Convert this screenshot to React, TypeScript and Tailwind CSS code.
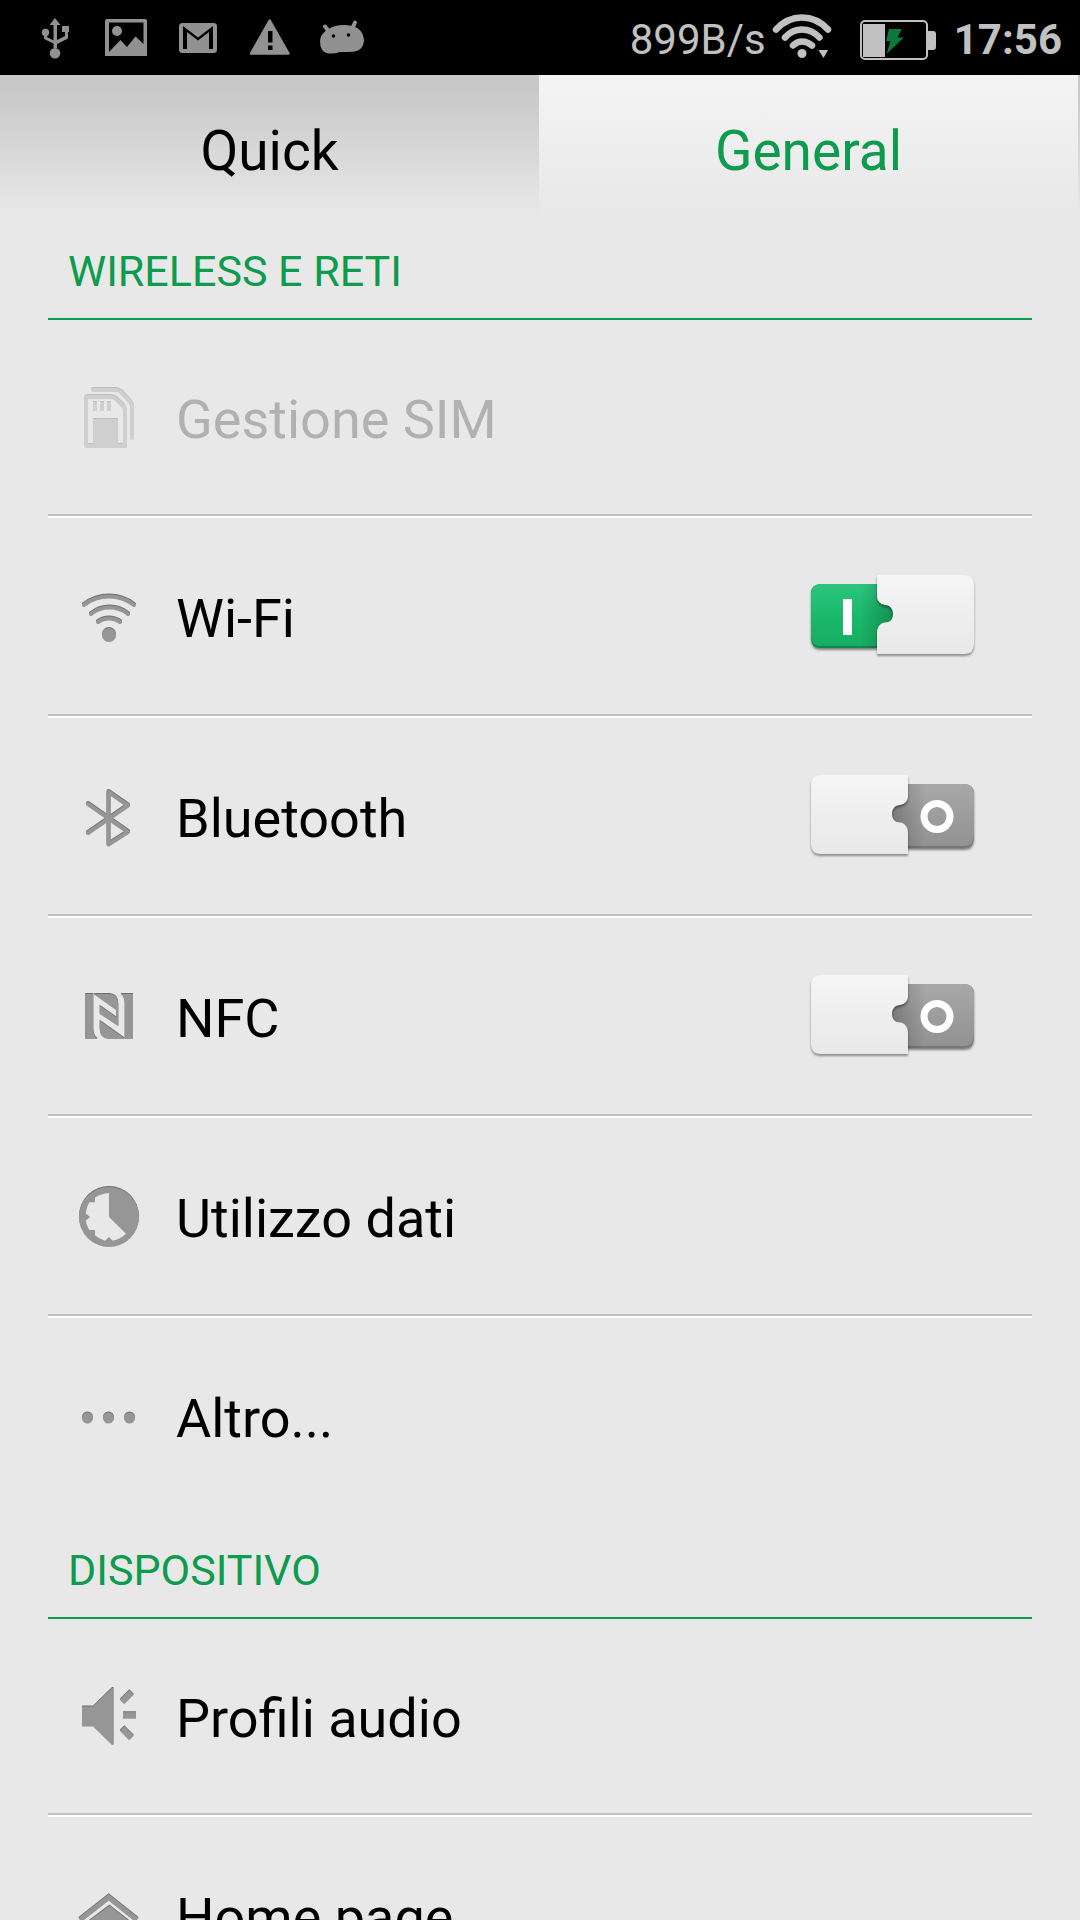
import { useState, type ReactNode } from "react";

type Tab = "Quick" | "General";
type Item = { id: string; label: string; icon: ReactNode; toggle?: boolean; disabled?: boolean };

const TABS: Tab[] = ["Quick", "General"];

const SIM_ICON = (
  <g fill="#cfcfcf" stroke="none">
    <path d="M17 5H40Q43 5 45 7L54 17Q56 19 56 22V53" fill="none" stroke="#cfcfcf" strokeWidth="4" strokeLinecap="round" />
    <path d="M12 12H34Q38 12 40 14L47 21Q49 23 49 26V61H10V14Q10 12 12 12Z" fill="none" stroke="#cfcfcf" strokeWidth="4" strokeLinejoin="round" />
    <path d="M17 17h4v9h-4zM24 17h4v9h-4zM31 17h4v9h-4z" />
    <path d="M18 34H41Q42 34 42 35V62H17V35Q17 34 18 34Z" />
  </g>
);

const WIFI_ICON = (
  <g fill="none" strokeWidth="4" strokeLinecap="round">
    <path d="M8 21A41 41 0 0 1 58 21" />
    <path d="M15 30A30 30 0 0 1 52 30" />
    <path d="M22 38A19 19 0 0 1 44 38" />
    <circle cx="33" cy="51" r="7" fill="#969696" stroke="none" />
  </g>
);

const BLUETOOTH_ICON = (
  <path d="M12 20L52 48L32.500 60.500V8L52 21.500L12 49" fill="none" strokeWidth="4" strokeLinecap="round" strokeLinejoin="round" />
);

const NFC_ICON = (
  <g stroke="none">
    {/* left block, inner half turns, right block */}
    <path d="M9 10H17.300V45Q17.300 52 21.500 55H9Z" />
    <path d="M17.300 10H34Q42.300 11 42.300 20V42.300L23.700 30V36.700L48.700 54.500V55H32Q23.700 54 23.700 45V21.700L40 33.300V26Z" />
    <path d="M57 55H48.700V20Q48.700 13 44.500 10H57Z" />
  </g>
);

const DATA_ICON = (
  <g stroke="none">
    <circle cx="33" cy="33" r="30" />
    <path
      fill="#e8e8e8"
      d="M33 33V9Q25 9.500 19 13.500V18.300H13.300Q10.500 23 9.700 29.300L14 33L9.700 36.700Q10.500 41.500 13.300 46H19V51.300Q23 55 29 56.700L33 53L36.700 56.700Q44 55.500 50 49.700Z"
    />
  </g>
);

const MORE_ICON = (
  <g stroke="none">
    <circle cx="11.500" cy="34" r="5.500" />
    <circle cx="32.500" cy="34" r="5.500" />
    <circle cx="53.500" cy="34" r="5.500" />
  </g>
);

const AUDIO_ICON = (
  <g>
    <path d="M6 22.500H17L36 4H37.500V61H36L17 42.500H6Z" stroke="none" />
    <path d="M46 18L55.500 8.500M47 31.500H60M46 44.500L55.500 54" fill="none" strokeWidth="6.500" />
  </g>
);

const HOME_ICON = (
  <g>
    <path d="M4 37L32.700 14.500L61 37" fill="none" strokeWidth="5" />
    <path d="M33.300 22.500L57 41V62H9V41Z" stroke="none" />
  </g>
);

const SECTIONS: { title: string; items: Item[] }[] = [
  {
    title: "WIRELESS E RETI",
    items: [
      { id: "sim", label: "Gestione SIM", icon: SIM_ICON, disabled: true },
      { id: "wifi", label: "Wi-Fi", icon: WIFI_ICON, toggle: true },
      { id: "bluetooth", label: "Bluetooth", icon: BLUETOOTH_ICON, toggle: true },
      { id: "nfc", label: "NFC", icon: NFC_ICON, toggle: true },
      { id: "data", label: "Utilizzo dati", icon: DATA_ICON },
      { id: "more", label: "Altro...", icon: MORE_ICON },
    ],
  },
  {
    title: "DISPOSITIVO",
    items: [
      { id: "audio", label: "Profili audio", icon: AUDIO_ICON },
      { id: "home", label: "Home page", icon: HOME_ICON },
    ],
  },
];

function StatusBar() {
  return (
    <header className="flex h-[75px] shrink-0 items-center justify-between bg-black pl-8 pr-[18px] text-[42px] leading-[50px] text-[#c1c1c1]">
      <div className="flex gap-6">
        {/* USB */}
        <svg className="h-[75px] w-12" viewBox="32 0 48 75" fill="#919191" aria-hidden="true">
          <path d="M55 18L60.500 25H57V40L65 36V32H62V26H69V32H68V37.500Q68 38.500 67 39L57 44V48H53.500V43.500L45 39.500Q44 39 44 38V35H47V37L53.500 40.500V25H49.500Z" />
          <circle cx="45.500" cy="32.500" r="3.700" />
          <circle cx="55" cy="53.300" r="5.300" />
        </svg>
        {/* Screenshot */}
        <svg className="h-[75px] w-12" viewBox="104 0 48 75" fill="#919191" aria-hidden="true">
          <path fillRule="evenodd" d="M107 19H145Q147 19 147 21V56H105V21Q105 19 107 19ZM109 22.500V52L120.500 40L127 47L135.500 36.500L143.500 44V22.500Z" />
          <circle cx="117" cy="31" r="5" />
        </svg>
        {/* Mail */}
        <svg className="h-[75px] w-12" viewBox="176 0 48 75" aria-hidden="true">
          <rect x="179" y="23" width="38" height="30" rx="3.500" fill="#919191" />
          <path d="M183 49V26L198 37.500L213 26V49H209V32L198 40.500L187 32V49Z" fill="#000" />
        </svg>
        {/* Warning */}
        <svg className="h-[75px] w-12" viewBox="248 0 48 75" aria-hidden="true">
          <path d="M269.700 20.500L288.500 53.500H251Z" fill="#919191" stroke="#919191" strokeWidth="2.500" strokeLinejoin="round" />
          <path d="M268 31h4.500v11.500H268zM268 45.500h4.500v4.500H268z" fill="#000" />
        </svg>
        {/* Android */}
        <svg className="h-[75px] w-12" viewBox="320 0 48 75" aria-hidden="true">
          <path d="M325 26.500L328.500 31M355 22.500L352.500 28" stroke="#919191" strokeWidth="4" strokeLinecap="round" />
          <path d="M327 30Q334 25 344 25Q353 25 358 28.500Q364 33 364 41Q363 50 355 51.500Q350 52 340 52Q334 54 328 53.500Q320 52 320 41Q320.500 34 327 30Z" fill="#919191" />
          <circle cx="333.500" cy="36" r="1.800" fill="#000" />
          <circle cx="348.500" cy="35" r="1.800" fill="#000" />
        </svg>
      </div>

      <div className="flex items-center">
        <span className="pt-1">899B/s</span>
        <svg className="ml-1.5 h-[75px] w-[62px]" viewBox="772 0 62 75" fill="none" stroke="#c1c1c1" aria-hidden="true">
          <path d="M776 29.500Q787 17.500 802 17.500Q817 17.500 828 29.500" strokeWidth="6.500" strokeLinecap="round" />
          <path d="M785 37.500Q792 29.500 802 29.500Q812 29.500 819.500 37.500" strokeWidth="6.500" strokeLinecap="round" />
          <path d="M793 45.500Q797 41.500 802 41.500Q807.500 41.500 812 45.500" strokeWidth="6.500" strokeLinecap="round" />
          <circle cx="802" cy="53.500" r="4.500" fill="#c1c1c1" stroke="none" />
          <path d="M818.500 50H828L823.500 58Z" fill="#c1c1c1" stroke="none" />
        </svg>
        <svg className="ml-6 mr-4 h-[75px] w-20" viewBox="858 0 80 75" fill="#c1c1c1" aria-hidden="true">
          <rect x="861" y="21" width="66" height="38" rx="4" fill="none" stroke="#c1c1c1" strokeWidth="2" />
          <path d="M863 24H885V57H863ZM928 31H933Q936 31 936 34V47Q936 50 933 50H928Z" />
          <path d="M889 29H902L897.500 37.500H904L886.500 54L890.500 41H886Z" fill="#0a7a3c" />
        </svg>
        <time className="pt-1 font-bold">17:56</time>
      </div>
    </header>
  );
}

function ToggleArt({ on }: { on: boolean }) {
  return (
    <svg className="h-24 w-44 overflow-visible" viewBox="0 0 176 96" aria-hidden="true">
      <defs>
        <linearGradient id="track-on" x1="0" y1="0" x2="0" y2="1">
          <stop offset="0" stopColor="#2cc580" />
          <stop offset="0.5" stopColor="#1bb96b" />
          <stop offset="1" stopColor="#17ae62" />
        </linearGradient>
        <linearGradient id="track-off" x1="0" y1="0" x2="0" y2="1">
          <stop offset="0" stopColor="#a8a8a8" />
          <stop offset="1" stopColor="#929292" />
        </linearGradient>
        <linearGradient id="thumb" x1="0" y1="0" x2="0" y2="1">
          <stop offset="0" stopColor="#f5f5f5" />
          <stop offset="1" stopColor="#e8e8e8" />
        </linearGradient>
        <linearGradient id="thumb-shade" x1="0" y1="0" x2="1" y2="0">
          <stop offset="0" stopColor="#000" stopOpacity="0" />
          <stop offset="1" stopColor="#000" stopOpacity="0.25" />
        </linearGradient>
      </defs>
      {/* the off state is the same piece turned left to right */}
      <g transform={on ? undefined : "translate(177 0) scale(-1 1)"}>
        <path className="drop-shadow-[0_2px_1px_rgba(0,0,0,0.45)]" d="M17 16H92V80H17Q7 80 7 70V26Q7 16 17 16Z" fill={on ? "#0b8a4a" : "#777777"} />
        <path d="M17 16H92V78H17Q7 78 7 68V26Q7 16 17 16Z" fill={on ? "url(#track-on)" : "url(#track-off)"} />
        <path d="M56 16H92V80H56Z" fill="url(#thumb-shade)" />
        <path
          className="drop-shadow-[0_2px_1px_rgba(0,0,0,0.4)]"
          d="M73 7H160Q170 7 170 17V76Q170 86 160 86H73V65C73 59 76 55 81 54.500C86 54.500 89 51 89 46C89 41 86 37 81 37C76 36 73 33 73 28Z"
          fill="url(#thumb)"
        />
      </g>
      {on ? (
        <rect x="39" y="31" width="9" height="36" fill="#fff" />
      ) : (
        <circle cx="133" cy="48.500" r="13" fill="none" stroke="#fff" strokeWidth="7" />
      )}
    </svg>
  );
}

function Row({ item, on, onToggle }: { item: Item; on: boolean; onToggle: () => void }) {
  const content = (
    <>
      <svg
        className={`h-16 w-16 shrink-0 ${item.disabled ? "drop-shadow-[0_-1px_0_#bdbdbd]" : "drop-shadow-[0_-1px_0_#6e6e6e]"}`}
        viewBox="0 0 64 64"
        fill="#969696"
        stroke="#969696"
        aria-hidden="true"
      >
        {item.icon}
      </svg>
      <span className={`grow pt-1.5 ${item.disabled ? "text-[#b1b1b1]" : "text-black"}`}>{item.label}</span>
    </>
  );

  if (item.toggle) {
    return (
      <label className="flex w-full items-center gap-9 pl-7 pr-[52px]">
        {content}
        <span className="relative">
          <input type="checkbox" role="switch" checked={on} onChange={onToggle} className="absolute inset-0 h-full w-full opacity-0" />
          <ToggleArt on={on} />
        </span>
      </label>
    );
  }

  return (
    <button type="button" disabled={item.disabled} className="flex w-full items-center gap-9 pl-7 pr-[52px] text-left">
      {content}
    </button>
  );
}

export default function App() {
  const [tab, setTab] = useState<Tab>("General");
  const [enabled, setEnabled] = useState<Record<string, boolean>>({ wifi: true });

  return (
    <div className="flex h-screen flex-col overflow-hidden bg-[#e8e8e8] font-['Roboto',sans-serif]">
      <StatusBar />

      <div role="tablist" className="grid h-[140px] shrink-0 grid-cols-2 bg-linear-to-b from-[#c8c8c8] from-10% to-[#e8e8e8] pr-0.5">
        {TABS.map((t) => (
          <button
            key={t}
            type="button"
            role="tab"
            aria-selected={tab === t}
            onClick={() => setTab(t)}
            className={`pt-3 text-[55px] leading-[64px] ${
              tab === t ? "bg-linear-to-b from-[#f4f4f4] to-[#e8e8e8] text-[#0d9b4e]" : "text-black"
            }`}
          >
            {t}
          </button>
        ))}
      </div>

      <main className="min-h-0 flex-1 overflow-y-auto px-12 [scrollbar-width:none]">
        {SECTIONS.map((section) => (
          <section key={section.title}>
            <h2 className="flex h-[105px] items-center border-b-2 border-[#0d9b4e] pl-5 pt-2 text-[43px] leading-[50px] text-[#0d9b4e]">
              {section.title}
            </h2>
            <ul className="text-[54px] leading-[64px]">
              {section.items.map((item, i) => (
                <li key={item.id}>
                  {i > 0 && <div className="h-1 border-t-2 border-[#c1c1c1] bg-white" />}
                  <div className={`flex ${i === 0 ? "h-[194px]" : "h-[196px]"}`}>
                    <Row
                      item={item}
                      on={!!enabled[item.id]}
                      onToggle={() => setEnabled((prev) => ({ ...prev, [item.id]: !prev[item.id] }))}
                    />
                  </div>
                </li>
              ))}
            </ul>
          </section>
        ))}
      </main>
    </div>
  );
}
